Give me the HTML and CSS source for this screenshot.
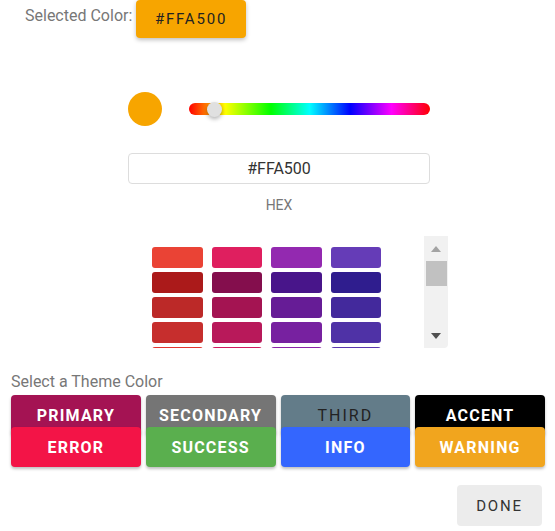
FILE: index.html
```html
<!DOCTYPE html>
<html>
<head>
<meta charset="utf-8">
<link rel="stylesheet" href="styles.css">
</head>
<body>
<div class="dialog">
  <div class="header">
    <span class="header-label">Selected Color:</span>
    <button class="selected-btn">#FFA500</button>
  </div>

  <div class="picker">
    <div class="hue-row">
      <div class="preview"></div>
      <div class="hue-slider">
        <div class="hue-thumb"></div>
      </div>
    </div>
    <div class="hex-input">#FFA500</div>
    <div class="hex-label">HEX</div>
  </div>

  <div class="swatch-box">
    <div class="swatch-scroll">
      <div class="swatch-grid">
        <div class="swatch" style="background:#ea4335"></div>
        <div class="swatch" style="background:#df1f5f"></div>
        <div class="swatch" style="background:#9329b0"></div>
        <div class="swatch" style="background:#653cb7"></div>
        <div class="swatch" style="background:#ab1a1a"></div>
        <div class="swatch" style="background:#840e4d"></div>
        <div class="swatch" style="background:#48158a"></div>
        <div class="swatch" style="background:#2f1d8e"></div>
        <div class="swatch" style="background:#bc2928"></div>
        <div class="swatch" style="background:#a41452"></div>
        <div class="swatch" style="background:#661c96"></div>
        <div class="swatch" style="background:#43299c"></div>
        <div class="swatch" style="background:#c62e2d"></div>
        <div class="swatch" style="background:#b8195a"></div>
        <div class="swatch" style="background:#7721a0"></div>
        <div class="swatch" style="background:#4f32a6"></div>
        <div class="swatch" style="background:#e2352f"></div>
        <div class="swatch" style="background:#d01a5e"></div>
        <div class="swatch" style="background:#8a24a8"></div>
        <div class="swatch" style="background:#5b36ae"></div>
      </div>
    </div>
    <div class="scrollbar">
      <div class="arrow-up"></div>
      <div class="thumb"></div>
      <div class="spacer"></div>
      <div class="arrow-down"></div>
    </div>
  </div>

  <div class="theme-label">Select a Theme Color</div>
  <div class="theme-grid">
    <button class="theme-btn primary">PRIMARY</button>
    <button class="theme-btn secondary">SECONDARY</button>
    <button class="theme-btn third">THIRD</button>
    <button class="theme-btn accent">ACCENT</button>
    <button class="theme-btn error">ERROR</button>
    <button class="theme-btn success">SUCCESS</button>
    <button class="theme-btn info">INFO</button>
    <button class="theme-btn warning">WARNING</button>
  </div>

  <div class="actions">
    <button class="done-btn">DONE</button>
  </div>
</div>
</body>
</html>
```

FILE: styles.css
```css
* { box-sizing: border-box; }
html, body { margin: 0; padding: 0; background: #fff; }
body { font-family: Roboto, "Liberation Sans", sans-serif; width: 555px; height: 531px; overflow: hidden; }

.dialog { display: flex; flex-direction: column; }

.header { display: flex; align-items: flex-start; padding-left: 25px; height: 38px; }
.header-label { font-size: 16px; color: #777; line-height: 18px; margin-top: 7px; width: 111px; }
.selected-btn {
  width: 110px; height: 38px; border: 0; border-radius: 4px;
  background: #f7a500; color: #222; font-family: inherit;
  font-size: 15px; font-weight: 400; letter-spacing: 1.8px;
  box-shadow: 0 2px 4px rgba(0,0,0,0.25);
  padding: 0;
}

.picker { margin-left: 128px; width: 302px; display: flex; flex-direction: column; }
.hue-row { display: flex; align-items: center; margin-top: 54px; height: 34px; gap: 27px; }
.preview { width: 34px; height: 34px; border-radius: 50%; background: #f7a500; flex: none; }
.hue-slider {
  position: relative; flex: 1; height: 12px; border-radius: 6px;
  background: linear-gradient(to right, #f00 0%, #ff0 15%, #0f0 34%, #0ff 50%, #00f 67%, #f0f 84%, #f00 100%);
}
.hue-thumb {
  position: absolute; left: 18px; top: -1.5px; width: 15px; height: 15px; border-radius: 50%;
  background: #e0e0e0; box-shadow: 0 2px 4px rgba(0,0,0,0.3);
}
.hex-input {
  margin-top: 27px; height: 31px; border: 1px solid #ddd; border-radius: 4px;
  text-align: center; font-size: 16px; line-height: 29px; color: #333;
}
.hex-label { margin-top: 13px; text-align: center; font-size: 14px; line-height: 16px; color: #777; }

.swatch-box { display: flex; margin-top: 23px; margin-left: 128px; width: 320px; height: 112px; }
.swatch-scroll { flex: 1; overflow: hidden; padding: 11px 0 0 24px; }
.swatch-grid { display: grid; grid-template-columns: repeat(4, 50.5px); column-gap: 9px; row-gap: 4px; }
.swatch { height: 21px; border-radius: 3px; }

.scrollbar { width: 24px; background: #f1f1f1; display: flex; flex-direction: column; align-items: center; border-bottom-right-radius: 4px; }
.arrow-up { margin-top: 10px; width: 0; height: 0; border-left: 5.5px solid transparent; border-right: 5.5px solid transparent; border-bottom: 6px solid #a3a3a3; }
.thumb { margin-top: 9px; width: 21px; height: 25px; background: #c1c1c1; }
.spacer { flex: 1; }
.arrow-down { margin-bottom: 9px; width: 0; height: 0; border-left: 5.5px solid transparent; border-right: 5.5px solid transparent; border-top: 6px solid #505050; }

.theme-label { margin-top: 25px; margin-left: 11px; font-size: 16px; line-height: 18px; color: #777; }
.theme-grid {
  margin: 4px 10px 0 11px; display: grid; grid-template-columns: repeat(4, 1fr);
  grid-template-rows: 32px 40px; column-gap: 5px;
}
.theme-btn {
  height: 40px; border: 0; border-radius: 4px; padding: 0;
  font-family: inherit; font-size: 16px; font-weight: 700; letter-spacing: 1.2px; color: #fff;
  box-shadow: 0 2px 3px rgba(0,0,0,0.25);
}
.primary { background: #a41353; }
.secondary { background: #757575; }
.third { background: #637c89; color: #222; font-weight: 400; letter-spacing: 2px; }
.accent { background: #000; }
.error { background: #f31447; }
.success { background: #5aaf4e; }
.info { background: #3466fe; }
.warning { background: #f1a51e; }

.actions { display: flex; justify-content: flex-end; margin-top: 18px; padding-right: 13px; }
.done-btn {
  width: 85px; height: 41px; border: 0; border-radius: 4px; background: #ececec;
  font-family: inherit; font-size: 15px; font-weight: 400; letter-spacing: 1.8px; color: #333; padding: 0;
}
```
